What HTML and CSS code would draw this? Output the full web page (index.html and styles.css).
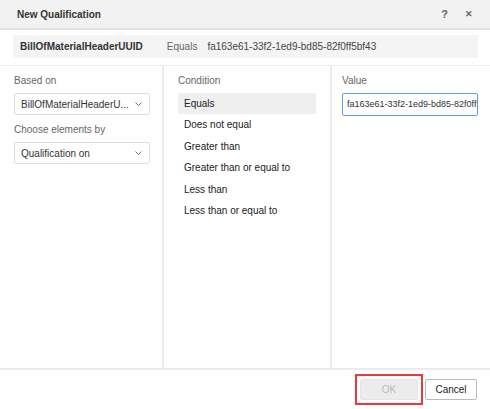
FILE: index.html
```html
<!DOCTYPE html>
<html lang="en">
<head>
  <meta charset="UTF-8" />
  <title>New Qualification</title>
  <link rel="stylesheet" href="styles.css">
</head>
<body>
  <div class="dialog">
    <div class="dialog-header">
      <span class="title">New Qualification</span>
      <span class="header-icons"><span class="help">?</span><span class="close">&#x2715;</span></span>
    </div>

    <div class="summary">
      <span class="summary-field">BillOfMaterialHeaderUUID</span>
      <span class="summary-op">Equals</span>
      <span class="summary-value">fa163e61-33f2-1ed9-bd85-82f0ff5bf43</span>
    </div>

    <div class="panels">
      <div class="panel panel-left">
        <div class="label">Based on</div>
        <div class="select">
          <span class="select-text">BillOfMaterialHeaderU...</span>
          <svg class="chev" width="7" height="4" viewBox="0 0 7 4"><polyline points="0.5,0.5 3.5,3.5 6.5,0.5" fill="none" stroke="#777" stroke-width="1"/></svg>
        </div>
        <div class="label label-gap">Choose elements by</div>
        <div class="select">
          <span class="select-text">Qualification on</span>
          <svg class="chev" width="7" height="4" viewBox="0 0 7 4"><polyline points="0.5,0.5 3.5,3.5 6.5,0.5" fill="none" stroke="#777" stroke-width="1"/></svg>
        </div>
      </div>
      <div class="panel panel-mid">
        <div class="label">Condition</div>
        <ul class="cond-list">
          <li class="selected">Equals</li>
          <li>Does not equal</li>
          <li>Greater than</li>
          <li>Greater than or equal to</li>
          <li>Less than</li>
          <li>Less than or equal to</li>
        </ul>
      </div>
      <div class="panel panel-right">
        <div class="label">Value</div>
        <div class="value-input">fa163e61-33f2-1ed9-bd85-82f0ff5bf43</div>
      </div>
    </div>

    <div class="dialog-footer">
      <span class="ok-wrap"><button class="btn btn-ok" disabled>OK</button></span>
      <button class="btn btn-cancel">Cancel</button>
    </div>
  </div>
</body>
</html>
```

FILE: styles.css
```css
body {
  margin: 0;
  font-family: "Liberation Sans", Arial, sans-serif;
  font-size: 10px;
  color: #333;
  background: #fff;
}
.dialog {
  width: 490px;
  height: 409px;
  display: flex;
  flex-direction: column;
}
.dialog-header {
  height: 28px;
  flex-shrink: 0;
  background: #f2f2f2;
  border-bottom: 2px solid #e2e2e2;
  display: flex;
  align-items: center;
  justify-content: space-between;
  padding: 0 16px 0 17px;
}
.title {
  font-weight: bold;
  font-size: 10px;
  color: #333;
}
.header-icons {
  display: flex;
  align-items: center;
  gap: 17px;
  font-size: 11px;
  color: #666;
  font-weight: bold;
  margin-right: 1px;
}
.close {
  font-size: 9px;
}
.summary {
  flex-shrink: 0;
  margin: 5px 12px 0 13px;
  height: 23px;
  background: #f4f4f4;
  display: flex;
  align-items: center;
  padding: 0 7px;
  color: #444;
}
.summary-field {
  font-weight: bold;
  color: #333;
  margin-right: 24px;
}
.summary-op {
  color: #666;
  margin-right: 10px;
}
.panels {
  flex-shrink: 0;
  margin-top: 7px;
  border-top: 1px solid #eee;
  border-bottom: 2px solid #ececec;
  height: 302px;
  display: flex;
}
.panel {
  flex-shrink: 0;
  box-sizing: border-box;
  padding: 9px 14px 0;
}
.panel-left {
  width: 164px;
  border-right: 2px solid #ececec;
}
.panel-mid {
  width: 168px;
  border-right: 2px solid #ececec;
}
.panel-right {
  flex: 1;
  min-width: 0;
  padding-left: 10px;
  padding-right: 12px;
}
.label {
  color: #666;
  height: 16px;
}
.label-gap {
  margin-top: 9px;
}
.select {
  margin-top: 2px;
  width: 136px;
  height: 22px;
  box-sizing: border-box;
  border: 1px solid #ddd;
  border-radius: 2px;
  display: flex;
  align-items: center;
  justify-content: space-between;
  padding: 0 7px 0 6px;
  color: #333;
}
.select-text {
  white-space: nowrap;
  overflow: hidden;
}
.chev {
  flex-shrink: 0;
  margin-left: 6px;
}
.cond-list {
  list-style: none;
  margin: 2px 0 0;
  padding: 0;
}
.cond-list li {
  height: 21.4px;
  line-height: 21px;
  padding-left: 6px;
  color: #222;
  white-space: nowrap;
}
.cond-list li.selected {
  background: #efefef;
}
.value-input {
  margin-top: 2px;
  height: 23px;
  box-sizing: border-box;
  border: 1px solid #5a9fe6;
  border-radius: 2px;
  padding: 0 4px;
  font-size: 9px;
  line-height: 21px;
  white-space: nowrap;
  overflow: hidden;
  color: #333;
}
.dialog-footer {
  flex: 1;
  display: flex;
  justify-content: flex-end;
  align-items: flex-start;
  padding: 9px 13px 0 0;
  gap: 2px;
}
.ok-wrap {
  display: flex;
  border: 2px solid #e83a3a;
  padding: 3px;
  margin-top: -5px;
}
.btn {
  font-family: inherit;
  font-size: 10px;
  height: 21px;
  border: 1px solid #bbb;
  border-radius: 2px;
  background: #fff;
  color: #222;
  padding: 0 10px;
}
.btn-ok {
  width: 58px;
  background: #ececec;
  border-color: #e4e4e4;
  color: #bbb;
}
.btn-cancel {
  width: 52px;
  padding: 0;
}
```
